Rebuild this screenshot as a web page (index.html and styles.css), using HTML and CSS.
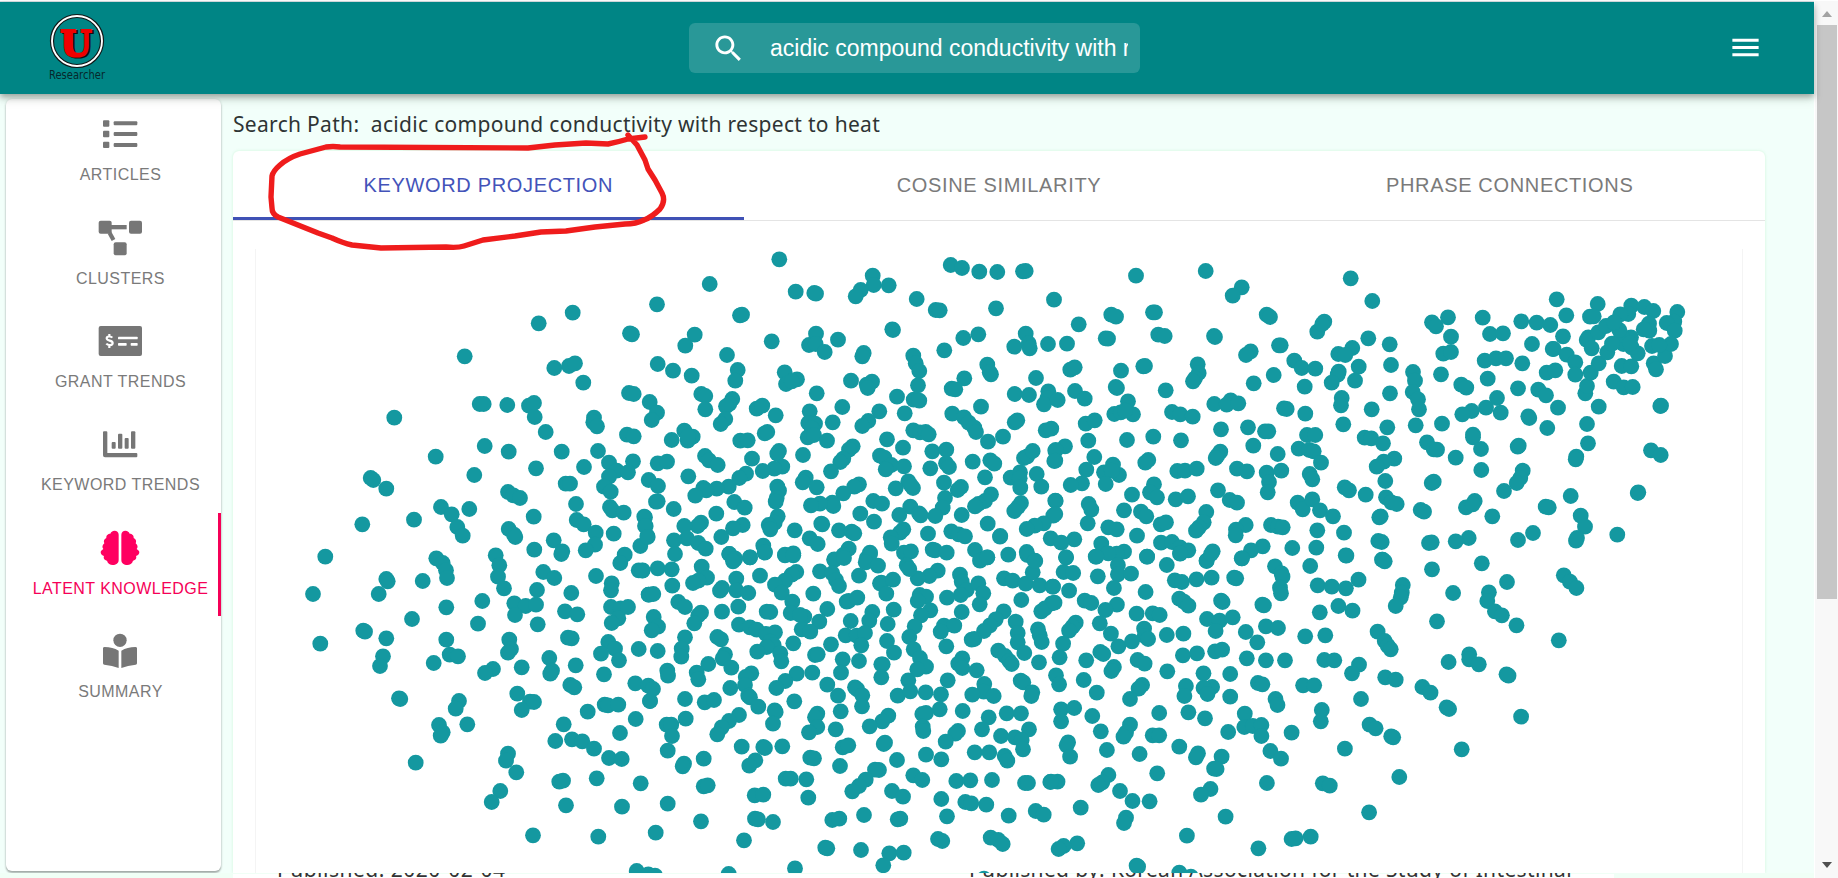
FILE: index.html
```html
<!DOCTYPE html>
<html lang="en">
<head>
<meta charset="utf-8">
<title>Researcher</title>
<link rel="stylesheet" href="styles.css">
</head>
<body>
<div class="viewport">
  <div class="page">
    <header class="appbar">
      <svg class="logo" width="66" height="64" viewBox="0 0 66 64">
        <circle cx="33" cy="30" r="25" fill="none" stroke="#101818" stroke-width="4.2"/>
        <circle cx="33" cy="30" r="25" fill="none" stroke="#fff" stroke-width="1.9"/>
        <text class="logo-u logo-shade" x="34" y="45.5">U</text>
        <text class="logo-u" x="32" y="44.5">U</text>
        <text class="logo-name" x="5" y="68" textLength="56" lengthAdjust="spacingAndGlyphs">Researcher</text>
      </svg>
      <div class="search">
        <svg class="search-icon" viewBox="0 0 24 24"><path d="M15.5 14h-.79l-.28-.27C15.41 12.59 16 11.11 16 9.5 16 5.91 13.09 3 9.5 3S3 5.91 3 9.5 5.91 16 9.5 16c1.61 0 3.09-.59 4.23-1.57l.27.28v.79l5 4.99L20.49 19l-4.99-5zm-6 0C7.01 14 5 11.99 5 9.5S7.01 5 9.5 5 14 7.01 14 9.5 11.99 14 9.5 14z"/></svg>
        <span class="search-text">acidic compound conductivity with respect to heat</span>
      </div>
      <svg class="menu-icon" viewBox="0 0 24 24"><path d="M3 18h18v-2H3v2zm0-5h18v-2H3v2zm0-7v2h18V6H3z"/></svg>
    </header>
    <div class="body">
      <nav class="sidebar">
        <div class="item">
          <svg class="icon" viewBox="0 0 132 108"><rect x="15" y="13" width="19" height="19" rx="3"/><rect x="15" y="44" width="19" height="20" rx="3"/><rect x="15" y="77" width="19" height="19" rx="3"/><rect x="47" y="16" width="71" height="12" rx="3"/><rect x="47" y="48" width="71" height="12" rx="3"/><rect x="47" y="81" width="71" height="12" rx="3"/></svg>
          <span>ARTICLES</span>
        </div>
        <div class="item">
          <svg class="icon" viewBox="0 0 132 108"><rect x="2" y="2" width="39" height="39" rx="6"/><rect x="93" y="2" width="39" height="39" rx="6"/><rect x="47" y="67" width="39" height="39" rx="6"/><rect x="38" y="15" width="48" height="13"/><path d="M29 41l11-6 12 22-11 6z"/></svg>
          <span>CLUSTERS</span>
        </div>
        <div class="item">
          <svg class="icon" viewBox="0 0 132 108"><rect x="2" y="9" width="130" height="90" rx="6"/><g fill="#fff"><rect x="60" y="41" width="59" height="8" rx="2"/><rect x="60" y="60" width="26" height="8" rx="2"/><rect x="98" y="60" width="21" height="8" rx="2"/></g><path d="M43 44c-4-5-17-5-17 2 0 9 18 5 18 14 0 8-14 8-19 2M34 33v8M34 66v9" fill="none" stroke="#fff" stroke-width="6.5"/></svg>
          <span>GRANT TRENDS</span>
        </div>
        <div class="item">
          <svg class="icon" viewBox="0 0 132 108"><path d="M15 19q0-3 3-3h7q3 0 3 3v62h87q3 0 3 3v7q0 3-3 3H21q-6 0-6-6z"/><rect x="41" y="48" width="12" height="20" rx="3"/><rect x="60" y="23" width="13" height="45" rx="3"/><rect x="80" y="36" width="12" height="32" rx="3"/><rect x="99" y="16" width="13" height="52" rx="3"/></svg>
          <span>KEYWORD TRENDS</span>
        </div>
        <div class="item active">
          <svg class="icon" viewBox="0 0 132 108"><path d="M62 14C62 6 56 2 50 2c-7 0-11 4-13 9-7 0-13 5-12 13-7 3-9 10-6 16-7 5-7 13-3 17-6 4-8 7-8 10 0 6 5 10 10 11-3 7 2 13 9 14 2 9 10 13 17 13 10 0 18-5 18-15z"/><path d="M70 14C70 6 76 2 82 2c7 0 11 4 13 9 7 0 13 5 12 13 7 3 9 10 6 16 7 5 7 13 3 17 6 4 8 7 8 10 0 6-5 10-10 11 3 7-2 13-9 14-2 9-10 13-17 13-10 0-18-5-18-15z"/></svg>
          <span>LATENT KNOWLEDGE</span>
        </div>
        <div class="item">
          <svg class="icon" viewBox="0 0 132 108"><circle cx="66" cy="22" r="20"/><path d="M15 46q0-4 5-4 24 0 42 11v52q-19-8-43-10-4 0-4-4zM117 46q0-4-5-4-24 0-42 11v52q19-8 43-10 4 0 4-4z"/></svg>
          <span>SUMMARY</span>
        </div>
      </nav>
      <main class="content">
        <div class="path">Search Path:&nbsp; acidic compound conductivity with respect to heat</div>
        <section class="card">
          <div class="tabs">
            <div class="tab selected">KEYWORD PROJECTION</div>
            <div class="tab">COSINE SIMILARITY</div>
            <div class="tab">PHRASE CONNECTIONS</div>
          </div>
          <div class="chart"><svg id="plot" class="plot" viewBox="256 249 1486 624"></svg></div>
        </section>
      </main>
    </div>
    <footer class="next">
      <div class="sheet"><span class="pub-date">Published: 2020-02-04</span><span class="pub-by">Published by: Korean Association for the Study of Intestinal</span></div>
    </footer>
  </div>
  <div class="scrollbar">
    <svg class="arrow up" viewBox="0 0 10 6"><path d="M0 6L5 0l5 6z"/></svg>
    <div class="thumb"></div>
    <svg class="arrow down" viewBox="0 0 10 6"><path d="M0 0l5 6 5-6z"/></svg>
  </div>
  <svg class="markup" viewBox="0 0 1838 878"><path d="M628 135L637 145L645 160L648 169L655 180L662 193Q666 201 660 209Q652 217 644 220Q636 224 625 224L595 227L566 231L541 232L515 236L483 240L464 246Q458 248 446 247L381 248L352 245Q343 243 332 238L318 233L278 217Q272 214 272 208L271 197L272 176Q273 171 280 165Q288 158 300 154L326 147Q333 146 340 147L528 148L555 145L586 143L608 144Q618 142 628 139L645 137"/></svg>
</div>
<script src="plot.js"></script>
</body>
</html>
```
FILE: styles.css
```css
* { box-sizing: border-box; }
body { margin: 0; background: #f3fffb; overflow: hidden; font-family: "Liberation Sans", Arial, sans-serif; }
.viewport { position: relative; display: flex; width: 1838px; height: 878px; border-top: 1px solid #fff; }
.page { flex: 1; display: flex; flex-direction: column; min-width: 0; background: #f2fffa; border-top: 1px solid #d8e0e4; }
.appbar { position: relative; z-index: 2; flex: none; height: 92px; display: flex; align-items: center; padding: 0 51px 0 44px; background: #008585; box-shadow: 0 3px 6px rgba(0,0,0,.3), 0 6px 10px rgba(0,40,0,.1); }
.logo { overflow: visible; margin-top: -10px; }
.logo-u { font: bold 36px "DejaVu Serif", serif; text-anchor: middle; fill: #f00000; stroke: #f00000; stroke-width: 2px; }
.logo-shade { fill: #101010; stroke: #101010; }
.logo-name { font: 12.5px "DejaVu Sans", sans-serif; fill: #06282c; }
.search { display: flex; align-items: center; width: 451px; height: 50px; margin: 0 auto 0 579px; padding: 0 12px 0 22px; border-radius: 6px; background: rgba(255,255,255,.16); }
.search-icon { width: 35px; height: 35px; flex: none; fill: #fff; }
.search-text { flex: 1; margin-left: 24px; overflow: hidden; white-space: nowrap; font-size: 23px; line-height: 30px; color: #fff; }
.menu-icon { width: 35px; height: 35px; margin-top: -1px; fill: #fff; }
.body { flex: 1; display: flex; min-height: 0; padding: 5px 49px 0 6px; gap: 12px; }
.sidebar { flex: none; width: 215px; height: 772px; padding-left: 14px; background: #fff; border-radius: 6px; box-shadow: 0 2px 2px rgba(0,0,0,.3), 0 0 3px rgba(0,0,0,.12); }
.item { height: 103.4px; display: flex; flex-direction: column; align-items: center; justify-content: center; gap: 13px; color: #7a7a7a; font-size: 16px; line-height: 20px; letter-spacing: .46px; white-space: nowrap; }
.icon { width: 44px; height: 36px; margin-right: 1px; fill: #767676; }
.active { color: #f50057; box-shadow: inset -3px 0 #f50057; }
.active .icon { fill: #ff0060; }
.content { flex: 1; display: flex; flex-direction: column; min-width: 0; }
.path { height: 52px; padding-top: 10px; font: 21px/30px "Noto Sans", sans-serif; letter-spacing: .31px; color: #2e3434; white-space: nowrap; }
.card { flex: 1; min-height: 0; display: flex; flex-direction: column; background: #fff; border-radius: 6px 6px 0 0; box-shadow: 0 0 3px rgba(100,220,120,.25); }
.tabs { display: flex; flex: none; height: 70px; border-bottom: 1.5px solid #e4e4e4; }
.tab { flex: 1; height: 69px; display: flex; align-items: center; justify-content: center; font-size: 20px; letter-spacing: .66px; color: #7a7a7a; }
.selected { color: #4353b9; box-shadow: inset 0 -3px #3f51b5; }
.chart { flex: 1; min-height: 0; margin: 28px 22px 0; border: solid #f4f4f4; border-width: 0 1px; overflow: hidden; }
.plot { display: block; width: 1486px; height: 624px; fill: #1498a0; overflow: visible; }
.next { flex: none; height: 5px; padding: 1px 200px 0 233px; background: #f0fff6; overflow: hidden; }
.sheet { display: flex; align-items: flex-end; height: 4px; background: #fff; white-space: nowrap; font: 21px/17px "Noto Sans", sans-serif; color: #333; }
.pub-date { width: 736px; padding-left: 44px; letter-spacing: .5px; }
.pub-by { letter-spacing: .35px; }
.scrollbar { flex: none; width: 24px; display: flex; flex-direction: column; align-items: center; background: #f8f8f8; border-left: 1px solid #fff; }
.arrow { width: 10px; height: 6px; flex: none; }
.up { margin: 10px 0 8px; fill: #a3a3a3; }
.down { margin-top: auto; margin-bottom: 10px; fill: #505050; }
.thumb { width: 20px; height: 574px; background: #c6c6c6; }
.markup { position: absolute; left: 0; top: -1px; width: 1838px; height: 878px; z-index: 5; pointer-events: none; fill: none; stroke: #ef1c1c; stroke-width: 5.4; stroke-linecap: round; stroke-linejoin: round; }
```
FILE: plot.js
```js
// Projected keywords, grouped by map region. Each region holds an origin, units per pixel, and x,y pairs.
const regions = [
  { at: [230, 240], unit: [3, 3], points: `1028,218 926,250 1200,280 1206,283 704,349 973,384 1017,378 1035,370 1060,428 749,492 761,492 832,495 897,497 912,489 914,531 947,576 493,533 1092,533 1090,547 1101,559 1197,459 1211,462 1191,584 1211,589 764,618 836,635 995,635 1104,633 617,650 918,685 1062,681 733,705 422,714 430,720 469,746 1137,668 1160,692 1137,710 1122,740 1142,755 1209,664 1194,697 1007,731 1020,731 834,756 850,766 870,774 1038,792 1140,801 1147,811 1181,818 633,801 665,823 682,861 698,887 718,807 552,839 397,853 911,830 1040,840 1061,853 1097,878 1095,914 1067,931 1151,881 1243,830 1245,858 1252,888 1231,918 836,867 852,884 856,891 971,901 997,934 994,942 913,929` },
  { at: [640, 240], unit: [3, 3], points: `418,58 209,132 51,193 467,155 523,159 528,161 698,107 701,135 662,150 647,169 746,136 932,75 966,84 1018,95 1072,96 1149,94 1157,93 300,226 306,224 830,177 887,210 899,211 1068,205 757,268 759,270 164,284 136,317 395,304 528,281 507,315 527,312 554,336 594,299 970,294 1015,283 1157,281 1123,320 1166,310 1169,325 1224,312 913,331 261,345 671,339 667,349 53,372 99,392 155,407 293,390 286,422 434,397 438,432 471,418 455,424 633,422 680,434 696,425 683,444 820,347 827,370 838,393 834,436 973,415 1042,374 1053,403 1049,397 1188,414 184,462 196,468 196,508 277,477 268,492 258,499 256,537 242,552 29,486 51,518 35,540 530,460 771,470 821,479 838,482 935,446 946,448 1124,462 1167,465 1225,454 1222,475 1212,493 350,506 367,497 407,526 509,514 607,501 718,514 794,520 1023,500 937,521 578,547 505,549 525,551 515,565 685,543 667,558 972,532 986,548 1003,563 1008,576 1124,547 1132,541 133,572 158,590 143,602 144,590 95,600 374,580 382,576 301,602 323,601 503,592 522,585 561,602 820,571 840,577 857,576 866,583 741,598 1044,605 1089,590 1217,571 1234,566 789,623 417,633 412,641 638,619 627,629 610,656 601,666 573,694 489,645 336,656 195,648 207,661 233,675 53,670 81,665 720,647 733,653 754,675 737,688 792,679 877,634 919,629 918,670 927,681 871,685 998,665 1051,661 1063,671 1152,654 1162,649 1178,633 1246,632 1243,663 427,680 403,686 368,693 318,701 298,714 266,740 230,746 190,744 199,751 166,767 145,709 26,720 54,738 497,713 488,727 530,742 412,740 417,752 410,774 407,785 805,724 767,745 819,744 812,735 912,728 963,741 953,750 1035,712 1112,713 1140,697 1139,715 1141,743 1190,702 1204,740 657,733 643,740 610,760 577,788 580,798 540,791 513,796 700,783 726,791 915,774 908,803 886,828 1053,763 1035,783 1015,792 1005,799 1143,789 1134,801 1123,813 1246,782 48,785 53,784 101,807 283,786 314,803 229,821 413,829 404,848 386,855 391,868 661,821 702,845 811,800 778,825 837,820 842,826 965,825 1043,851 1240,827 1211,850 1184,857 1160,867 183,848 173,858 133,858 308,855 279,865 244,891 141,895 102,901 175,909 197,926 105,942 15,832 17,858 23,891 544,851 547,853 464,871 597,871 635,875 643,880 509,895 533,912 790,868 780,878 752,892 755,911 864,881 934,874 956,883 975,889 1080,890 1081,888 1232,895 370,917 374,938 626,926 610,945 690,938 680,955 268,942 285,958 330,952 435,946 460,940 792,938 813,934 878,929 885,931 920,938 1005,930 1042,952 1105,944 1160,936 1162,945 1184,962 583,960` },
  { at: [1050, 240], unit: [3, 3], points: `258,107 467,93 575,142 548,167 902,115 967,183 12,179 184,224 198,230 309,217 315,217 650,224 660,231 823,245 802,275 817,252 86,253 167,295 174,296 325,284 344,288 492,288 495,291 955,295 1019,313 51,311 687,316 692,316 602,334 588,345 907,324 865,342 886,345 733,362 755,384 796,386 926,380 1023,375 61,389 74,382 280,379 285,378 213,392 443,373 446,399 435,415 429,424 671,405 866,395 863,404 845,428 915,422 611,430 764,440 197,441 201,444 75,453 104,476 347,451 23,480 234,484 875,474 873,496 1020,460 193,522 212,517 249,523 225,512 366,516 391,523 428,530 493,492 542,481 530,494 565,490 702,505 710,507 766,521 965,508 880,553 1012,562 107,551 134,541 513,568 594,562 645,574 655,574 115,602 231,600 310,590 393,601 610,617 771,585 796,585 944,593 964,595 999,610 683,642 746,626 778,630 791,634 813,668 511,635 502,647 497,654 45,619 17,630 16,662 133,651 189,674 162,697 207,705 185,692 167,732 109,689 96,730 62,735 295,660 286,668 382,693 405,692 440,686 561,686 591,694 650,698 694,692 657,726 653,757 779,702 787,718 1033,656 1001,665 980,680 1006,723 312,733 300,757 321,772 246,764 884,742 897,751 947,764 504,751 539,780 561,788 377,778 414,769 17,783 16,822 116,792 124,809 113,850 222,811 273,815 289,829 469,816 461,847 447,862 438,872 743,788 758,808 787,778 810,811 849,829 1008,772 1024,787 1040,792 988,832 992,829 175,862 200,868 332,853 348,847 261,887 587,855 558,869 557,886 663,855 684,860 698,862 802,871 882,878 985,903 995,906 73,898 34,908 154,911 137,950 48,952 222,935 200,941 175,940 333,908 366,906 390,922 415,931 390,941 291,950 488,934 470,962 638,919 603,931 576,955 727,924 799,923 887,946 996,959` },
  { at: [1400, 240], unit: [3, 3], points: `470,178 593,192 499,226 570,230 581,229 694,197 733,201 760,213 832,216 685,222 661,223 823,245 800,249 824,272 144,232 96,247 108,259 248,233 153,290 364,244 410,248 451,255 270,282 309,280 489,289 396,312 130,341 153,336 458,327 461,327 500,344 526,367 526,404 39,396 45,422 38,456 54,478 57,508 123,403 254,362 288,355 318,355 367,370 263,416 440,398 466,391 184,434 199,443 354,445 291,474 258,503 302,518 215,513 187,523 415,449 438,466 474,503 47,556 126,551 385,529 388,534 442,564 81,607 101,628 111,629 219,584 219,592 243,627 353,620 356,617 167,653 244,690 368,692 361,714 350,729 312,753 95,729 101,725 62,810 72,815 198,802 224,783 218,793 277,829 437,800 446,802 512,768 542,827 555,860 528,902 531,894 652,884 399,879 354,900 206,894 167,904 87,909 95,907 596,500 561,552 564,610 529,650 527,658 781,498 783,497 753,631 782,645 713,759 715,757 556,460 561,438 572,398 596,370 622,337 641,425 671,442 698,441 665,378 694,379 761,370 768,388 795,348 813,312 756,318 778,315 713,340 695,322 693,292 670,312 664,285 658,270 636,311 565,292 560,300 575,325 595,277 618,258 642,247 747,251 748,272 731,268 690,310` },
  { at: [230, 550], unit: [3, 3], points: `619,25 638,39 648,61 651,84 797,16 808,46 804,80 822,115 286,20 249,132 469,87 473,94 446,132 578,93 757,153 649,172 546,207 744,221 853,160 887,168 918,164 921,120 855,195 923,223 940,66 973,84 1024,129 1098,78 1005,184 1042,193 1145,100 1143,121 1143,171 1172,175 1194,171 1165,205 1145,219 1184,14 1171,39 1226,61 1237,62 1256,134 400,242 405,245 271,281 469,265 459,319 450,348 649,269 659,314 684,319 611,339 838,269 843,297 834,308 789,357 765,369 875,352 1014,263 1025,265 958,324 966,362 961,371 1037,346 1135,276 1155,296 1113,311 1167,331 1122,373 1226,297 1216,400 507,445 511,447 687,453 677,476 627,525 638,547 632,557 712,523 862,431 900,455 912,456 875,480 1021,405 1033,412 1073,485 1124,464 1134,466 1165,464 1260,453 1217,507 1170,549 1001,523 976,573 1026,568 1057,574 1092,596 1137,624 1175,627 834,611 828,632 859,667 557,638 988,695 999,692 1100,685 1232,700 811,723 785,756 1008,766 1176,770 909,856 1105,860 1220,963` },
  { at: [640, 550], unit: [3, 3], points: `8,61 53,55 95,58 185,50 201,83 175,92 159,99 97,107 26,134 40,132 360,77 289,86 246,114 240,122 289,121 325,129 268,12 285,25 279,34 330,22 375,6 435,14 460,16 469,66 455,74 435,92 405,104 425,128 457,155 452,189 540,64 583,28 612,24 577,70 588,90 597,108 657,77 520,131 690,12 677,37 714,47 724,98 720,100 759,89 739,131 620,155 626,153 652,143 562,177 538,215 493,200 485,238 511,245 480,195 115,156 135,171 183,188 175,196 163,220 246,185 295,170 380,185 391,186 41,201 54,230 35,241 135,262 125,296 124,320 297,224 330,232 350,239 378,252 405,247 390,275 401,285 380,291 352,305 421,310 424,334 460,280 232,261 243,268 255,313 248,325 205,342 274,353 53,303 632,213 697,186 688,212 743,222 761,179 617,256 650,257 675,249 664,286 573,283 525,315 533,313 608,328 657,333 603,368 741,273 762,308 728,343 724,343 724,382 517,368 470,371 436,393 409,414 82,362 84,377 170,368 175,388 334,370 317,381 315,405 271,414 325,437 330,442 355,470 25,407 39,417 30,453 562,404 594,437 645,412 652,418 667,436 666,469 463,454 135,447 194,457 222,450 602,484 773,437 805,391 811,424 857,427 903,433 923,391 899,478 137,506 404,481 407,486 399,521 532,491 525,502 532,531 507,547 587,538 80,524 94,524 96,558 83,602 297,495 267,513 245,532 232,553 745,497 727,514 689,529 305,590 370,591 375,594 427,589 346,631 328,647 191,626 132,641 128,649 608,592 625,586 731,582 735,578 600,648 511,623 522,625 771,630 858,614 904,628 717,660 705,659 677,689 657,708 637,724 820,676 847,690 949,693 991,691 1056,690 191,709 203,706 437,686 452,686 499,688 505,743 344,736 370,734 756,723 789,740 904,747 976,756 994,760 1039,764 83,761 183,814 345,806 354,808 399,816 577,810 598,806 672,795 773,808 781,806 921,799 1106,797 1187,783 1211,794 47,848 312,871 556,893 562,895 663,900 748,910 791,908 730,946 894,867 907,873 1052,863 1075,870 1088,882 465,955 266,972 25,973 45,977 960,74 965,95 980,120 962,135 921,143 1015,100 1030,130 1019,163 893,62 868,78 833,85 800,46 808,57 839,135 858,140 833,153 871,181 843,196 824,229 808,261 821,298 840,324 858,350 832,358 965,186 912,227 943,227 902,245 919,289 967,325 955,341 967,354 1010,361 1091,184 1067,208 1050,226 1032,243 1003,267 995,269 1127,215 1133,249 1133,277 1153,309 1075,302 1095,318 1108,333 1115,342 1197,337 1194,238 1199,256 1205,276 1092,85 1118,92 1157,101 1178,67 1186,33 1199,106 1238,110 1144,150 1204,184 1235,160 1215,175 1142,392 1150,397 1177,427 1174,438 1033,402 1031,425 997,434 1061,438 968,483 1046,502 1026,538 1100,490 1143,490 1083,558 1125,562 1167,538 1145,570 1149,598 1004,607 1048,607 1094,618 1102,632 954,543 946,551 917,575 847,492 858,489 848,530 850,543 1155,699 1164,699 1231,696 1020,32 1042,22 1032,986` },
  { at: [1050, 550], unit: [1.987, 3], points: `32,22 92,20 135,45 135,73 161,71 27,66 46,69 95,79 6,110 38,122 127,114 193,20 232,45 190,126 248,91 262,96 291,88 321,83 366,83 370,85 259,10 311,33 320,12 381,25 447,49 460,70 462,80 457,113 459,130 517,48 589,17 661,29 665,34 759,58 858,40 908,96 9,158 69,152 82,159 133,164 110,180 99,220 121,251 136,289 172,191 204,190 218,195 257,146 266,155 275,167 340,152 343,156 532,106 560,110 588,115 613,89 573,168 601,182 536,187 422,164 425,166 312,207 337,212 363,202 329,243 389,246 412,277 429,229 453,234 507,259 547,256 51,218 45,230 38,242 26,281 19,322 187,236 188,258 195,267 163,274 232,255 265,251 100,306 106,312 72,331 174,330 188,341 127,351 122,363 264,316 292,310 328,304 342,299 391,325 429,331 467,331 545,330 565,331 614,344 600,370 651,245 665,273 671,287 677,298 701,105 699,128 697,142 687,168 801,129 872,127 869,153 884,184 898,196 927,226 769,214 1021,76 1033,95 1046,114 1011,271 792,336 833,313 833,328 852,343 907,373 911,377 666,382 687,389 740,411 756,428 788,472 793,477 936,500 618,447 540,480 538,514 635,524 647,535 678,559 682,562 818,598 586,596 694,681 634,787 480,548 503,406 525,406 413,399 422,403 448,447 452,465 358,372 358,440 305,370 270,408 267,438 322,411 305,414 313,432 233,364 183,405 176,416 159,447 67,390 93,428 12,376 18,403 275,487 308,505 217,489 387,491 386,531 403,528 420,525 420,558 354,546 22,478 48,474 22,514 84,498 101,544 159,524 151,548 146,560 204,556 217,556 36,577 33,586 40,620 113,600 178,612 257,590 294,610 290,622 341,620 326,656 331,657 438,603 459,626 431,699 542,700 556,707 116,675 104,697 96,705 139,723 213,670 164,753 198,754 319,717 300,734 15,695 2,695 61,773 151,803 147,819 349,800 272,857 414,895 480,867 488,865 518,860 54,880 27,888 17,897 172,947 175,950 257,968 280,980` }
];
const plot = document.getElementById("plot");
for (const { at, unit, points } of regions) {
  for (const pair of points.split(" ")) {
    const [x, y] = pair.split(",").map(Number);
    const dot = document.createElementNS("http://www.w3.org/2000/svg", "circle");
    dot.setAttribute("cx", (at[0] + x / unit[0]).toFixed(1));
    dot.setAttribute("cy", (at[1] + y / unit[1]).toFixed(1));
    dot.setAttribute("r", "7.9");
    plot.appendChild(dot);
  }
}
```
